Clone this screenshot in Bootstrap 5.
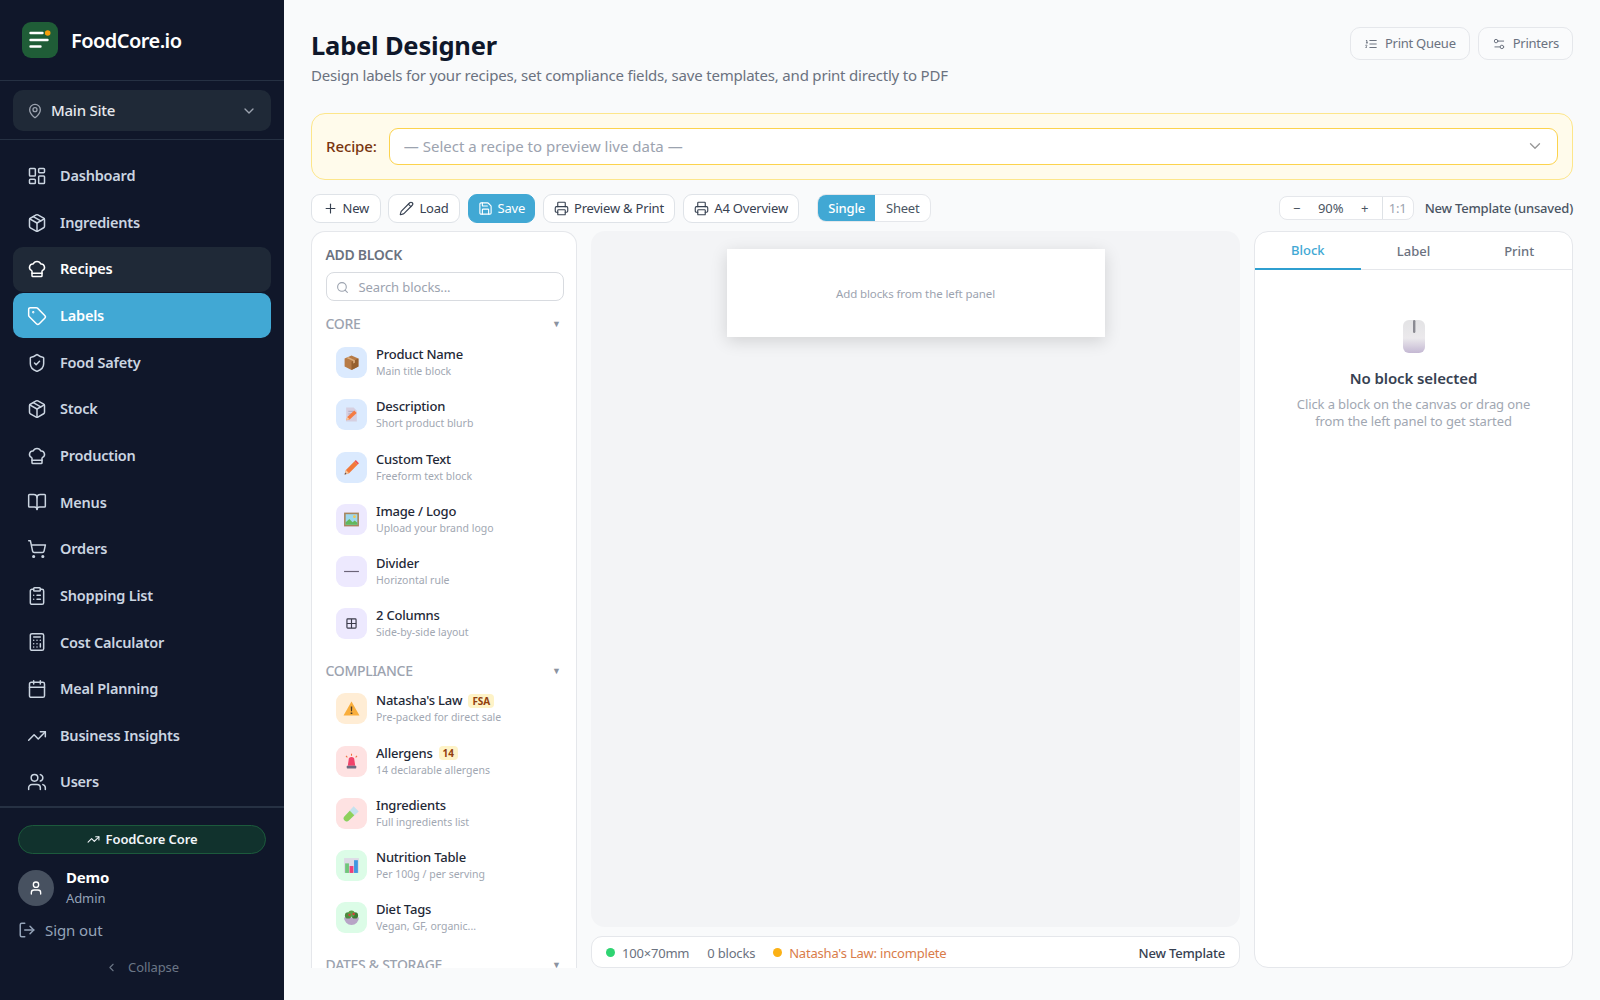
<!DOCTYPE html>
<html lang="en">
<head>
<meta charset="utf-8">
<title>Label Designer</title>
<link href="https://cdn.jsdelivr.net/npm/bootstrap@5.3.0/dist/css/bootstrap.min.css" rel="stylesheet">
<style>
:root{--fc-font:"Noto Sans","Open Sans",sans-serif;--fc-blue:#41a8d4;--fc-line:#e5e7eb}
html,body{height:1000px;overflow:hidden}
body{font-family:var(--fc-font);background:#f9fafb;color:#111827;font-size:14px}
.ico{width:1em;height:1em;fill:none;stroke:currentColor;stroke-width:2;stroke-linecap:round;stroke-linejoin:round;flex:none}
.fc-shell{height:1000px}
.fc-side{width:284px;flex:none;background:#10172a;color:#cbd5e1}
.fc-brand{height:81px;padding:0 22px;gap:13px;border-bottom:1px solid #263143}
.fc-logo{width:36px;height:36px;border-radius:9px;background:#1f5d37}
.fc-brand-name{font-size:20px;font-weight:600;color:#fff;letter-spacing:-.55px;padding-top:2px}
.fc-sitewrap{padding:9px 13px 8px;border-bottom:1px solid #263143}
.fc-site{height:41px;background:#1f2937;border-radius:10px;padding:0 14px;gap:8px;font-size:15px;font-weight:500;color:#e5e7eb;letter-spacing:-.25px}
.fc-site .ico{font-size:16px;color:#9ca3af}
.fc-nav{padding:13.5px 13px 0;gap:1.65px}
.fc-nav .nav-link{height:45px;display:flex;align-items:center;gap:13px;padding:0 14px;border-radius:10px;color:#cbd5e1;font-size:14.5px;font-weight:600;letter-spacing:-.2px}
.fc-nav .nav-link .ico{font-size:20px;stroke-width:1.8}
.fc-nav .nav-link.is-hover{background:#1f2937;color:#fff}
.fc-nav .nav-link.active{background:var(--fc-blue);color:#fff}
.fc-foot{border-top:2px solid #263143;padding:17.5px 18px 0;margin-top:1px}
.fc-plan{height:29px;border-radius:15px;background:#11322d;border:1px solid #1c5a3c;color:#f1f5f9;font-size:13px;font-weight:600;gap:6px;margin-bottom:13px;letter-spacing:-.1px}
.fc-avatar{width:36px;height:36px;border-radius:50%;background:#475160;color:#fff;font-size:16px}
.fc-user{font-size:15px;font-weight:700;color:#fff;line-height:20px;letter-spacing:-.2px}
.fc-role{font-size:13px;color:#94a3b8;line-height:22px;letter-spacing:-.1px}
.fc-signout{color:#94a3b8;font-size:15px;gap:9px;margin-top:9px;height:24px;letter-spacing:-.1px}
.fc-signout .ico{font-size:18px}
.fc-collapse{color:#6b7686;font-size:13px;gap:10px;margin-top:15px;height:20px;letter-spacing:-.1px}
.fc-main{padding:27px 27px 32px;min-width:0}
.fc-title{font-size:25.5px;line-height:37px;font-weight:700;color:#0f172a;margin:0;letter-spacing:-.2px}
.fc-sub{font-size:15px;line-height:21px;color:#6b7280;margin:1px 0 0;letter-spacing:-.2px}
.fc-ghost{height:33px;padding:1px 13px 0;border:1px solid var(--fc-line);border-radius:10px;background:#fafbfc;color:#6b7280;font-size:13px;display:inline-flex;align-items:center;gap:7px;letter-spacing:-.25px}
.fc-ghost .ico{font-size:14px;stroke-width:1.7}
.fc-recipe{height:67px;margin-top:27px;background:#fffbeb;border:1px solid #fde68a;border-radius:14px;padding:0 14px;gap:12px}
.fc-recipe label{font-size:15px;font-weight:500;color:#78350f;white-space:nowrap;letter-spacing:-.1px}
.fc-recipe .form-select{height:37px;border:1.5px solid #fcd34d;border-radius:9px;font-size:15px;color:#9ca3af;padding:0 40px 0 14px;background-size:18px 18px;background-position:right 13px center;background-image:url("data:image/svg+xml,%3csvg xmlns='http://www.w3.org/2000/svg' viewBox='0 0 24 24' fill='none' stroke='%23999' stroke-width='1.8' stroke-linecap='round' stroke-linejoin='round'%3e%3cpath d='m6 9 6 6 6-6'/%3e%3c/svg%3e")}
.fc-tools{margin-top:14px;height:30px;gap:7.4px}
.fc-tbtn{height:29px;padding:0 10.5px;background:#fff;border:1px solid #dfe3e8;border-radius:9px;font-size:13px;color:#374151;display:inline-flex;align-items:center;gap:5px;letter-spacing:-.2px}
.fc-tbtn .ico{font-size:15px;stroke-width:1.8}
.fc-tbtn.btn-save{background:var(--fc-blue);border-color:var(--fc-blue);color:#fff;padding:0 9px}
.fc-seg{border:1px solid var(--fc-line);border-radius:9px;overflow:hidden;background:#fff;margin-left:10px;height:28px;font-size:13px;letter-spacing:-.2px}
.fc-seg span{padding:0 10.5px;display:flex;align-items:center;color:#4b5563}
.fc-seg span.on{background:var(--fc-blue);color:#fff;font-weight:500}
.fc-zoom{height:24px;border:1px solid var(--fc-line);border-radius:8px;background:#fff;font-size:13px;color:#4b5563;letter-spacing:-.15px}
.fc-zoom span{display:flex;align-items:center;justify-content:center;height:100%}
.fc-z1{width:34px}.fc-z4{width:31px;color:#9ca3af}
.fc-zoomlabel{font-size:13px;font-weight:500;color:#4b5563;margin-left:11px;letter-spacing:-.2px}
.fc-work{margin-top:8px;gap:14px;min-height:0}
.fc-left{width:266px;flex:none;background:#fff;border:1px solid var(--fc-line);border-bottom:0;border-radius:14px 14px 0 0;overflow:hidden;padding:0 12.5px 0 13.5px}
.fc-addhead{font-size:14px;font-weight:600;color:#6b7280;line-height:20px;margin-top:13px;letter-spacing:-.3px}
.fc-search{height:29px;margin-top:7px;padding:1px 9px 0;border:1px solid #d8dbe0;border-radius:8px;gap:10px;font-size:13px;color:#9ca3af;letter-spacing:-.1px}
.fc-search .ico{font-size:13px}
.fc-cat{font-size:14px;font-weight:500;color:#9ca3af;line-height:18px;letter-spacing:-.3px}
.fc-cat i{font-style:normal;font-size:9px;color:#8b93a0;margin-right:3px}
.fc-cat-core{margin-top:14px;margin-bottom:3px}
.fc-cat-comp{margin-top:12px;margin-bottom:2.5px}
.fc-cat-date{margin-top:11.5px}
.fc-row{height:52.3px;padding-left:10.5px;gap:9px}
.fc-tile{width:31px;height:31px;border-radius:9px;flex:none;display:flex;align-items:center;justify-content:center}
.fc-tile svg{width:17px;height:17px}
.t-blue{background:#dbeafe}.t-purple{background:#ede9fe}.t-orange{background:#ffedd5}.t-red{background:#fee2e2}.t-green{background:#dcfce7}
.fc-rowname{font-size:13px;font-weight:500;color:#1f2937;line-height:17px;display:flex;align-items:center;gap:5px;letter-spacing:-.2px}
.fc-rowsub{font-size:10.5px;color:#a1a7b2;line-height:15px;margin-top:1px}
.fc-pill{background:#fef3c7;color:#92400e;font-size:10px;font-weight:700;border-radius:4px;padding:0 4px;line-height:14px;margin-left:1px;letter-spacing:0}
.fc-canvas{background:#f3f4f6;border-radius:14px;min-height:0;padding-top:18px}
.fc-sheet{width:378px;height:88px;background:#fff;box-shadow:0 4px 16px rgba(0,0,0,.14);font-size:11.5px;color:#9ca3af;letter-spacing:-.1px}
.fc-status{height:32px;margin-top:9px;background:#fff;border:1px solid var(--fc-line);border-radius:11px;padding:3px 14px 0;font-size:13px;color:#6b7280;letter-spacing:-.2px}
.fc-dot{width:9px;height:9px;border-radius:50%;display:inline-block;margin-right:7px;margin-top:-3px}
.fc-dot-ok{background:#2fd472}.fc-dot-warn{background:#fbb116}
.fc-warn{color:#d97c4a}
.fc-gap{margin-left:18px}
.fc-tplname{color:#374151;font-weight:500}
.fc-right{width:319px;flex:none;background:#fff;border:1px solid var(--fc-line);border-radius:14px;overflow:hidden}
.fc-tabs{height:38px;border-bottom:1px solid var(--fc-line);font-size:13px;font-weight:500;color:#6b7280}
.fc-tabs span{flex:1;display:flex;align-items:center;justify-content:center;padding-top:2px}
.fc-tabs span.on{color:var(--fc-blue);border-bottom:2px solid #2f9fd0;margin-bottom:-1px;padding-top:0}
.fc-empty{padding-top:50px}
.fc-empty h6{font-size:15px;font-weight:600;color:#374151;margin:14px 0 0;line-height:22px;letter-spacing:-.1px}
.fc-empty p{font-size:13px;line-height:17px;color:#a1a7b2;margin:7px 0 0;letter-spacing:-.1px}
</style>
</head>
<body>
<svg width="0" height="0" class="position-absolute">
<defs>
<symbol id="i-dash" viewBox="0 0 24 24"><rect width="7" height="9" x="3" y="3" rx="1"/><rect width="7" height="5" x="14" y="3" rx="1"/><rect width="7" height="9" x="14" y="12" rx="1"/><rect width="7" height="5" x="3" y="16" rx="1"/></symbol>
<symbol id="i-pack" viewBox="0 0 24 24"><path d="M16.5 9.4 7.55 4.24"/><path d="M21 16V8a2 2 0 0 0-1-1.73l-7-4a2 2 0 0 0-2 0l-7 4A2 2 0 0 0 3 8v8a2 2 0 0 0 1 1.73l7 4a2 2 0 0 0 2 0l7-4A2 2 0 0 0 21 16z"/><path d="M3.29 7 12 12l8.71-5"/><path d="M12 22V12"/></symbol>
<symbol id="i-chef" viewBox="0 0 24 24"><path d="M17 21a1 1 0 0 0 1-1v-5.35c0-.457.316-.844.727-1.041a4 4 0 0 0-2.134-7.589 5 5 0 0 0-9.186 0 4 4 0 0 0-2.134 7.588c.411.198.727.585.727 1.041V20a1 1 0 0 0 1 1Z"/><path d="M6 17h12"/></symbol>
<symbol id="i-tag" viewBox="0 0 24 24"><path d="M12.586 2.586A2 2 0 0 0 11.172 2H4a2 2 0 0 0-2 2v7.172a2 2 0 0 0 .586 1.414l8.704 8.704a2.426 2.426 0 0 0 3.42 0l6.58-6.58a2.426 2.426 0 0 0 0-3.42z"/><circle cx="7.5" cy="7.5" r=".5"/></symbol>
<symbol id="i-shield" viewBox="0 0 24 24"><path d="M20 13c0 5-3.5 7.5-7.66 8.95a1 1 0 0 1-.67-.01C7.5 20.5 4 18 4 13V6a1 1 0 0 1 1-1c2 0 4.5-1.2 6.24-2.72a1.17 1.17 0 0 1 1.52 0C14.51 3.81 17 5 19 5a1 1 0 0 1 1 1z"/><path d="m9 12 2 2 4-4"/></symbol>
<symbol id="i-book" viewBox="0 0 24 24"><path d="M12 7v14"/><path d="M3 18a1 1 0 0 1-1-1V4a1 1 0 0 1 1-1h5a4 4 0 0 1 4 4 4 4 0 0 1 4-4h5a1 1 0 0 1 1 1v13a1 1 0 0 1-1 1h-6a3 3 0 0 0-3 3 3 3 0 0 0-3-3z"/></symbol>
<symbol id="i-cart" viewBox="0 0 24 24"><circle cx="8" cy="21" r="1"/><circle cx="19" cy="21" r="1"/><path d="M2.05 2.05h2l2.66 12.42a2 2 0 0 0 2 1.58h9.78a2 2 0 0 0 1.95-1.57l1.65-7.43H5.12"/></symbol>
<symbol id="i-clip" viewBox="0 0 24 24"><rect width="8" height="4" x="8" y="2" rx="1"/><path d="M16 4h2a2 2 0 0 1 2 2v14a2 2 0 0 1-2 2H6a2 2 0 0 1-2-2V6a2 2 0 0 1 2-2h2"/><path d="M12 11h4"/><path d="M12 16h4"/><path d="M8 11h.01"/><path d="M8 16h.01"/></symbol>
<symbol id="i-calc" viewBox="0 0 24 24"><rect width="16" height="20" x="4" y="2" rx="2"/><path d="M8 6h8"/><path d="M16 14v4"/><path d="M16 10h.01"/><path d="M12 10h.01"/><path d="M8 10h.01"/><path d="M12 14h.01"/><path d="M8 14h.01"/><path d="M12 18h.01"/><path d="M8 18h.01"/></symbol>
<symbol id="i-cal" viewBox="0 0 24 24"><path d="M8 2v4"/><path d="M16 2v4"/><rect width="18" height="18" x="3" y="4" rx="2"/><path d="M3 10h18"/></symbol>
<symbol id="i-trend" viewBox="0 0 24 24"><path d="M22 7 13.5 15.5 8.5 10.5 2 17"/><path d="M16 7h6v6"/></symbol>
<symbol id="i-users" viewBox="0 0 24 24"><path d="M16 21v-2a4 4 0 0 0-4-4H6a4 4 0 0 0-4 4v2"/><circle cx="9" cy="7" r="4"/><path d="M22 21v-2a4 4 0 0 0-3-3.87"/><path d="M16 3.13a4 4 0 0 1 0 7.75"/></symbol>
<symbol id="i-user" viewBox="0 0 24 24"><path d="M19 21v-2a4 4 0 0 0-4-4H9a4 4 0 0 0-4 4v2"/><circle cx="12" cy="7" r="4"/></symbol>
<symbol id="i-out" viewBox="0 0 24 24"><path d="M9 21H5a2 2 0 0 1-2-2V5a2 2 0 0 1 2-2h4"/><path d="m16 17 5-5-5-5"/><path d="M21 12H9"/></symbol>
<symbol id="i-pin" viewBox="0 0 24 24"><path d="M20 10c0 4.993-5.539 10.193-7.399 11.799a1 1 0 0 1-1.202 0C9.539 20.193 4 14.993 4 10a8 8 0 0 1 16 0"/><circle cx="12" cy="10" r="3"/></symbol>
<symbol id="i-down" viewBox="0 0 24 24"><path d="m6 9 6 6 6-6"/></symbol>
<symbol id="i-left" viewBox="0 0 24 24"><path d="m15 18-6-6 6-6"/></symbol>
<symbol id="i-plus" viewBox="0 0 24 24"><path d="M5 12h14"/><path d="M12 5v14"/></symbol>
<symbol id="i-pen" viewBox="0 0 24 24"><path d="M21.174 6.812a1 1 0 0 0-3.986-3.987L3.842 16.174a2 2 0 0 0-.5.83l-1.321 4.352a.5.5 0 0 0 .623.622l4.353-1.32a2 2 0 0 0 .83-.497z"/><path d="m15 5 4 4"/></symbol>
<symbol id="i-save" viewBox="0 0 24 24"><path d="M15.2 3a2 2 0 0 1 1.4.6l3.8 3.8a2 2 0 0 1 .6 1.4V19a2 2 0 0 1-2 2H5a2 2 0 0 1-2-2V5a2 2 0 0 1 2-2z"/><path d="M17 21v-7a1 1 0 0 0-1-1H8a1 1 0 0 0-1 1v7"/><path d="M7 3v4a1 1 0 0 0 1 1h7"/></symbol>
<symbol id="i-print" viewBox="0 0 24 24"><path d="M6 18H4a2 2 0 0 1-2-2v-5a2 2 0 0 1 2-2h16a2 2 0 0 1 2 2v5a2 2 0 0 1-2 2h-2"/><path d="M6 9V3a1 1 0 0 1 1-1h10a1 1 0 0 1 1 1v6"/><rect x="6" y="14" width="12" height="8" rx="1"/></symbol>
<symbol id="i-list" viewBox="0 0 24 24"><path d="M10 12h11"/><path d="M10 18h11"/><path d="M10 6h11"/><path d="M4 10h2"/><path d="M4 6h1v4"/><path d="M4 18H3c0-1 2-2 2-3s-1-1.5-2-1"/></symbol>
<symbol id="i-set" viewBox="0 0 24 24"><path d="M20 7h-9"/><path d="M14 17H5"/><circle cx="17" cy="17" r="3"/><circle cx="7" cy="7" r="3"/></symbol>
<symbol id="i-search" viewBox="0 0 24 24"><path d="m21 21-4.34-4.34"/><circle cx="11" cy="11" r="8"/></symbol>
<linearGradient id="g-mouse" x1="0" y1="0" x2="0" y2="1"><stop offset="0" stop-color="#e3e3e5"/><stop offset=".55" stop-color="#ebe9ec"/><stop offset="1" stop-color="#c4b8d3"/></linearGradient>
</defs>
</svg>

<div class="d-flex fc-shell">
  <aside class="fc-side d-flex flex-column">
    <div class="fc-brand d-flex align-items-center">
      <div class="fc-logo">
        <svg width="36" height="36" viewBox="0 0 36 36"><path d="M8.5 11h12M8.5 18h17M8.5 24.5h10" stroke="#fff" stroke-width="2.4" stroke-linecap="round" fill="none"/><circle cx="25.7" cy="11" r="2.8" fill="#f59e0b"/></svg>
      </div>
      <span class="fc-brand-name">FoodCore.io</span>
    </div>
    <div class="fc-sitewrap">
      <div class="fc-site d-flex align-items-center">
        <svg class="ico"><use href="#i-pin"/></svg>
        <span class="flex-grow-1">Main Site</span>
        <svg class="ico"><use href="#i-down"/></svg>
      </div>
    </div>
    <nav class="nav flex-column fc-nav flex-nowrap">
      <a class="nav-link" href="#"><svg class="ico"><use href="#i-dash"/></svg>Dashboard</a>
      <a class="nav-link" href="#"><svg class="ico"><use href="#i-pack"/></svg>Ingredients</a>
      <a class="nav-link is-hover" href="#"><svg class="ico"><use href="#i-chef"/></svg>Recipes</a>
      <a class="nav-link active" href="#"><svg class="ico"><use href="#i-tag"/></svg>Labels</a>
      <a class="nav-link" href="#"><svg class="ico"><use href="#i-shield"/></svg>Food Safety</a>
      <a class="nav-link" href="#"><svg class="ico"><use href="#i-pack"/></svg>Stock</a>
      <a class="nav-link" href="#"><svg class="ico"><use href="#i-chef"/></svg>Production</a>
      <a class="nav-link" href="#"><svg class="ico"><use href="#i-book"/></svg>Menus</a>
      <a class="nav-link" href="#"><svg class="ico"><use href="#i-cart"/></svg>Orders</a>
      <a class="nav-link" href="#"><svg class="ico"><use href="#i-clip"/></svg>Shopping List</a>
      <a class="nav-link" href="#"><svg class="ico"><use href="#i-calc"/></svg>Cost Calculator</a>
      <a class="nav-link" href="#"><svg class="ico"><use href="#i-cal"/></svg>Meal Planning</a>
      <a class="nav-link" href="#"><svg class="ico"><use href="#i-trend"/></svg>Business Insights</a>
      <a class="nav-link" href="#"><svg class="ico"><use href="#i-users"/></svg>Users</a>
    </nav>
    <div class="fc-foot">
      <div class="fc-plan d-flex align-items-center justify-content-center"><svg class="ico"><use href="#i-trend"/></svg>FoodCore Core</div>
      <div class="d-flex align-items-center gap-2">
        <div class="fc-avatar d-flex align-items-center justify-content-center"><svg class="ico"><use href="#i-user"/></svg></div>
        <div class="ms-1"><div class="fc-user">Demo</div><div class="fc-role">Admin</div></div>
      </div>
      <div class="fc-signout d-flex align-items-center"><svg class="ico"><use href="#i-out"/></svg>Sign out</div>
      <div class="fc-collapse d-flex align-items-center justify-content-center"><svg class="ico"><use href="#i-left"/></svg>Collapse</div>
    </div>
  </aside>

  <main class="fc-main flex-grow-1 d-flex flex-column">
    <header class="d-flex justify-content-between align-items-start">
      <div>
        <h1 class="fc-title">Label Designer</h1>
        <p class="fc-sub">Design labels for your recipes, set compliance fields, save templates, and print directly to PDF</p>
      </div>
      <div class="d-flex gap-2">
        <button class="fc-ghost"><svg class="ico"><use href="#i-list"/></svg>Print Queue</button>
        <button class="fc-ghost"><svg class="ico"><use href="#i-set"/></svg>Printers</button>
      </div>
    </header>

    <div class="fc-recipe d-flex align-items-center">
      <label for="recipe">Recipe:</label>
      <select id="recipe" class="form-select"><option>— Select a recipe to preview live data —</option></select>
    </div>

    <div class="fc-tools d-flex align-items-center">
      <button class="fc-tbtn"><svg class="ico"><use href="#i-plus"/></svg>New</button>
      <button class="fc-tbtn"><svg class="ico"><use href="#i-pen"/></svg>Load</button>
      <button class="fc-tbtn btn-save"><svg class="ico"><use href="#i-save"/></svg>Save</button>
      <button class="fc-tbtn"><svg class="ico"><use href="#i-print"/></svg>Preview &amp; Print</button>
      <button class="fc-tbtn"><svg class="ico"><use href="#i-print"/></svg>A4 Overview</button>
      <div class="fc-seg d-flex"><span class="on">Single</span><span>Sheet</span></div>
      <div class="ms-auto d-flex align-items-center">
        <div class="fc-zoom d-flex align-items-center">
          <span class="fc-z1">−</span><span class="fc-z1">90%</span><span class="fc-z1">+</span><span class="border-start fc-z4">1:1</span>
        </div>
        <span class="fc-zoomlabel">New Template (unsaved)</span>
      </div>
    </div>

    <div class="fc-work d-flex flex-grow-1">
      <section class="fc-left">
        <div class="fc-addhead">ADD BLOCK</div>
        <div class="fc-search d-flex align-items-center"><svg class="ico"><use href="#i-search"/></svg>Search blocks...</div>
        <div class="fc-cat fc-cat-core d-flex justify-content-between align-items-center">CORE<i>▼</i></div>

        <div class="fc-row d-flex align-items-center"><div class="fc-tile t-blue"><svg viewBox="0 0 16 16"><path d="M8 1.5 14.5 4.3V11.7L8 15 1.5 11.7V4.3z" fill="#b77b47"/><path d="M8 7.2 14.5 4.3V11.7L8 15z" fill="#96602f"/><path d="M4.8 2.9 11.2 5.8V8.2L9.6 8.9V6.6L3.2 3.7z" fill="#dcae7e"/></svg></div><div><div class="fc-rowname">Product Name</div><div class="fc-rowsub">Main title block</div></div></div>
        <div class="fc-row d-flex align-items-center"><div class="fc-tile t-blue"><svg viewBox="0 0 16 16"><path d="M3 1.5h7l3 3V14.5H3z" fill="#d6cfe0"/><path d="M5 5h5M5 7.5h4" stroke="#aea5bc" stroke-width=".9"/><path d="M3 13.5l1-3.2 6.6-6 2.3 2.4-6.6 6z" fill="#f47b42"/><path d="M3 13.5l1-3.2 2.3 2.2z" fill="#f5c9a0"/></svg></div><div><div class="fc-rowname">Description</div><div class="fc-rowsub">Short product blurb</div></div></div>
        <div class="fc-row d-flex align-items-center"><div class="fc-tile t-blue"><svg viewBox="0 0 16 16"><path d="M1.5 14.5l1.2-4.2 8.2-8.2 3 3-8.2 8.2z" fill="#f2793a"/><path d="M1.5 14.5l1.2-4.2 3 3z" fill="#f6c79c"/><path d="M1.5 14.5l.5-1.9 1.4 1.4z" fill="#4b4b55"/><path d="M10.9 2.1l1.1-1.1 3 3-1.1 1.1z" fill="#f04f4f"/></svg></div><div><div class="fc-rowname">Custom Text</div><div class="fc-rowsub">Freeform text block</div></div></div>
        <div class="fc-row d-flex align-items-center"><div class="fc-tile t-purple"><svg viewBox="0 0 16 16"><rect x="1" y="1.5" width="14" height="13" fill="#a6855e"/><rect x="2.5" y="3" width="11" height="10" fill="#9dd8ee"/><path d="M2.5 13V10.5L6 7.5l3 3 2-1.5 2.5 2V13z" fill="#62b85c"/><circle cx="10.8" cy="5.4" r="1.3" fill="#f6c547"/></svg></div><div><div class="fc-rowname">Image / Logo</div><div class="fc-rowsub">Upload your brand logo</div></div></div>
        <div class="fc-row d-flex align-items-center"><div class="fc-tile t-purple"><svg viewBox="0 0 16 16"><path d="M1 8h14" stroke="#6b6478" stroke-width="1.1"/></svg></div><div><div class="fc-rowname">Divider</div><div class="fc-rowsub">Horizontal rule</div></div></div>
        <div class="fc-row d-flex align-items-center"><div class="fc-tile t-purple"><svg viewBox="0 0 16 16"><rect x="3.7" y="3.7" width="8.6" height="8.6" rx=".8" fill="none" stroke="#3b3b4a" stroke-width="1.1"/><path d="M8 3.7v8.6M3.7 8h8.6" stroke="#3b3b4a" stroke-width="1.1"/></svg></div><div><div class="fc-rowname">2 Columns</div><div class="fc-rowsub">Side-by-side layout</div></div></div>

        <div class="fc-cat fc-cat-comp d-flex justify-content-between align-items-center">COMPLIANCE<i>▼</i></div>

        <div class="fc-row d-flex align-items-center"><div class="fc-tile t-orange"><svg viewBox="0 0 16 16"><path d="M8 1.5 15.5 14.5H.5z" fill="#f9ae3c"/><path d="M7.3 6h1.4l-.2 4.7h-1zM7.2 11.7h1.6v1.5H7.2z" fill="#4a3a28"/></svg></div><div><div class="fc-rowname">Natasha's Law <span class="fc-pill">FSA</span></div><div class="fc-rowsub">Pre-packed for direct sale</div></div></div>
        <div class="fc-row d-flex align-items-center"><div class="fc-tile t-red"><svg viewBox="0 0 16 16"><path d="M4.5 12 5.3 6.5a2.7 2.7 0 0 1 5.4 0L11.5 12z" fill="#f0436a"/><rect x="3.5" y="12" width="9" height="2.5" rx=".6" fill="#6d6a80"/><path d="M8 .8v1.8M2.8 2.8l1.3 1.3M13.2 2.8l-1.3 1.3" stroke="#f0703f" stroke-width="1"/></svg></div><div><div class="fc-rowname">Allergens <span class="fc-pill">14</span></div><div class="fc-rowsub">14 declarable allergens</div></div></div>
        <div class="fc-row d-flex align-items-center"><div class="fc-tile t-red"><svg viewBox="0 0 16 16"><path d="M10 1.2 14.8 6 5.5 14.6a2.7 2.7 0 0 1-4-4z" fill="#c5e2ee"/><path d="M6.4 5.4 10.6 9.6 5.5 14.6a2.7 2.7 0 0 1-4-4z" fill="#8ed05a"/></svg></div><div><div class="fc-rowname">Ingredients</div><div class="fc-rowsub">Full ingredients list</div></div></div>
        <div class="fc-row d-flex align-items-center"><div class="fc-tile t-green"><svg viewBox="0 0 16 16"><rect x="1" y="1" width="14" height="14" fill="#dedbe6"/><rect x="2" y="6" width="3.6" height="9" fill="#6fc67a"/><rect x="6.2" y="8.5" width="3.6" height="6.5" fill="#ef3f79"/><rect x="10.4" y="3" width="3.6" height="12" fill="#3f97e0"/></svg></div><div><div class="fc-rowname">Nutrition Table</div><div class="fc-rowsub">Per 100g / per serving</div></div></div>
        <div class="fc-row d-flex align-items-center"><div class="fc-tile t-green"><svg viewBox="0 0 16 16"><path d="M1 8h14a7 7 0 0 1-14 0z" fill="#b7a4c6"/><circle cx="4.8" cy="6" r="3" fill="#4d8b3f"/><circle cx="11.2" cy="6" r="3" fill="#3d7a34"/><circle cx="8" cy="4.4" r="3" fill="#5c9e48"/><circle cx="6.1" cy="5.5" r="1.1" fill="#d93a3a"/><circle cx="10" cy="4.6" r="1.1" fill="#d93a3a"/></svg></div><div><div class="fc-rowname">Diet Tags</div><div class="fc-rowsub">Vegan, GF, organic...</div></div></div>

        <div class="fc-cat fc-cat-date d-flex justify-content-between align-items-center">DATES &amp; STORAGE<i>▼</i></div>
      </section>

      <section class="d-flex flex-column flex-grow-1 overflow-hidden">
        <div class="fc-canvas flex-grow-1 d-flex justify-content-center align-items-start">
          <div class="fc-sheet d-flex align-items-center justify-content-center">Add blocks from the left panel</div>
        </div>
        <div class="fc-status d-flex align-items-center">
          <span class="fc-dot fc-dot-ok"></span><span>100×70mm</span>
          <span class="fc-gap">0 blocks</span>
          <span class="fc-dot fc-dot-warn fc-gap"></span><span class="fc-warn">Natasha's Law: incomplete</span>
          <span class="ms-auto fc-tplname">New Template</span>
        </div>
      </section>

      <section class="fc-right">
        <div class="fc-tabs d-flex"><span class="on">Block</span><span>Label</span><span>Print</span></div>
        <div class="fc-empty text-center">
          <svg width="22" height="33" viewBox="0 0 22 33"><rect x="0" y="0" width="22" height="33" rx="6" fill="url(#g-mouse)"/><rect x="10" y="0" width="2.4" height="13" rx="1.2" fill="#8a8a92"/></svg>
          <h6>No block selected</h6>
          <p>Click a block on the canvas or drag one<br>from the left panel to get started</p>
        </div>
      </section>
    </div>
  </main>
</div>
<script src="https://cdn.jsdelivr.net/npm/bootstrap@5.3.0/dist/js/bootstrap.bundle.min.js"></script>
</body>
</html>
